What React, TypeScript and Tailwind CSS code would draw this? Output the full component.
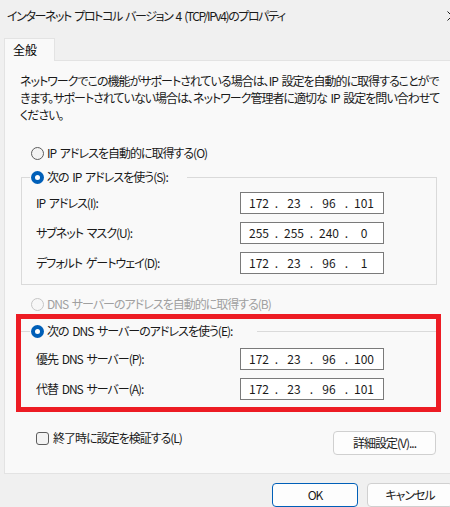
const ip1 = [
  { label: "IP アドレス(I):", parts: ["172", "23", "96", "101"] },
  { label: "サブネット マスク(U):", parts: ["255", "255", "240", "0"] },
  { label: "デフォルト ゲートウェイ(D):", parts: ["172", "23", "96", "1"] },
];

const dns = [
  { label: "優先 DNS サーバー(P):", parts: ["172", "23", "96", "100"] },
  { label: "代替 DNS サーバー(A):", parts: ["172", "23", "96", "101"] },
];

function IpInput({ parts }: { parts: string[] }) {
  return (
    <div className="flex h-[22px] w-[144px] items-center border border-[#7a7a7a] bg-white pl-[4px] tracking-normal">
      {parts.map((p, i) => (
        <div key={i} className="flex items-center">
          {i > 0 && <span className="w-[7px] text-center">.</span>}
          <span className="w-[28px] text-center">{p}</span>
        </div>
      ))}
    </div>
  );
}

function Radio({ checked, disabled }: { checked?: boolean; disabled?: boolean }) {
  if (checked) {
    return (
      <span className="flex h-[13px] w-[13px] shrink-0 items-center justify-center rounded-full bg-[#005fb8]">
        <span className="h-[5px] w-[5px] rounded-full bg-white" />
      </span>
    );
  }
  return (
    <span
      className={
        disabled
          ? "h-[13px] w-[13px] shrink-0 rounded-full border border-[#c6c6c6] bg-[#f7f7f7]"
          : "h-[13px] w-[13px] shrink-0 rounded-full border border-[#5d5d5d] bg-[#f3f3f3]"
      }
    />
  );
}

function FieldRow({ label, parts, pad }: { label: string; parts: string[]; pad: string }) {
  return (
    <div className={`flex h-[22px] items-center ${pad}`}>
      <span className="w-[204px]">{label}</span>
      <IpInput parts={parts} />
    </div>
  );
}

export default function App() {
  return (
    <div className="h-[507px] w-[450px] overflow-hidden bg-[#f0f0f0] font-['Noto_Sans_CJK_JP',sans-serif] text-[12px] tracking-[-1px] text-[#1a1a1a] [font-feature-settings:'palt'] [word-spacing:2px]">
      {/* title bar */}
      <div className="flex h-[32px] items-center pl-[7px]">
        <span className="tracking-[-1.4px]">インターネット プロトコル バージョン 4 (TCP/IPv4)のプロパティ</span>
        <svg className="ml-auto mr-[-7px] shrink-0" width="10" height="10" viewBox="0 0 10 10">
          <path d="M0.5 0.5 L9.5 9.5 M9.5 0.5 L0.5 9.5" stroke="#1a1a1a" strokeWidth="1" />
        </svg>
      </div>

      {/* tab */}
      <div className="mt-[6px] ml-[4px] flex">
        <div className="relative z-10 -mb-px flex h-[23px] w-[51px] items-center border border-b-0 border-[#e3e3e3] bg-[#f9f9f9] pl-[8px] tracking-normal text-[#000]">
          全般
        </div>
      </div>

      {/* panel */}
      <div className="ml-[4px] h-[414px] w-[456px] border border-[#e3e3e3] bg-[#f9f9f9]">
        <div className="pl-[15px] pt-[11px] leading-[17px]">
          <div className="whitespace-nowrap">ネットワークでこの機能がサポートされている場合は、IP 設定を自動的に取得することがで</div>
          <div className="whitespace-nowrap">きます。サポートされていない場合は、ネットワーク管理者に適切な IP 設定を問い合わせて</div>
          <div className="whitespace-nowrap">ください。</div>
        </div>

        <div className="mt-[20px] flex h-[20px] items-center gap-[3px] pl-[26px]">
          <Radio />
          <span>IP アドレスを自動的に取得する(O)</span>
        </div>

        {/* group 1 */}
        <div className="ml-[16px] mt-[4px] w-[416px]">
          <div className="flex h-[20px]">
            <div className="mt-[10px] w-[9px] border-l border-t border-[#dadada]" />
            <div className="flex w-[157px] items-center gap-[3px] pl-[1px]">
              <Radio checked />
              <span>次の IP アドレスを使う(S):</span>
            </div>
            <div className="mt-[10px] flex-1 border-r border-t border-[#dadada]" />
          </div>
          <div className="flex flex-col gap-[8px] border-x border-b border-[#dadada] pb-[10px] pl-[14px] pt-[5px]">
            {ip1.map((r) => (
              <FieldRow key={r.label} label={r.label} parts={r.parts} pad="" />
            ))}
          </div>
        </div>

        <div className="mt-[9px] flex h-[20px] items-center gap-[3px] pl-[26px] text-[#a0a0a0]">
          <Radio disabled />
          <span>DNS サーバーのアドレスを自動的に取得する(B)</span>
        </div>

        {/* group 2 with red highlight */}
        <div className="ml-[11px] w-[425px] border-[5px] border-[#ed1c24] pb-[7px] pt-[2px]">
          <div className="flex h-[20px]">
            <div className="mt-[10px] w-[9px] border-t border-[#dadada]" />
            <div className="flex w-[227px] items-center gap-[3px] pl-[1px]">
              <Radio checked />
              <span>次の DNS サーバーのアドレスを使う(E):</span>
            </div>
            <div className="mt-[10px] flex-1 border-t border-[#dadada]" />
          </div>
          <div className="mt-[7px] flex flex-col gap-[8px]">
            {dns.map((r) => (
              <FieldRow key={r.label} label={r.label} parts={r.parts} pad="pl-[15px]" />
            ))}
          </div>
        </div>

        <div className="mt-[19px] flex items-start">
          <div className="flex h-[14px] w-[328px] items-center gap-[4px] pl-[31px]">
            <span className="h-[13px] w-[13px] shrink-0 rounded-[3px] border border-[#5d5d5d] bg-[#f3f3f3]" />
            <span>終了時に設定を検証する(L)</span>
          </div>
          <button className="flex h-[24px] w-[103px] items-center justify-center rounded-[4px] border border-[#d0d0d0] bg-[#fdfdfd]">
            詳細設定(V)...
          </button>
        </div>
      </div>

      {/* dialog buttons */}
      <div className="mt-[9px] flex gap-[9px] pl-[272px]">
        <button className="flex h-[24px] w-[86px] shrink-0 items-center justify-center rounded-[4px] border border-[#005fb8] bg-[#fdfdfd]">
          OK
        </button>
        <button className="flex h-[24px] w-[86px] shrink-0 items-center justify-center rounded-[4px] border border-[#d0d0d0] bg-[#fdfdfd]">
          キャンセル
        </button>
      </div>
    </div>
  );
}
